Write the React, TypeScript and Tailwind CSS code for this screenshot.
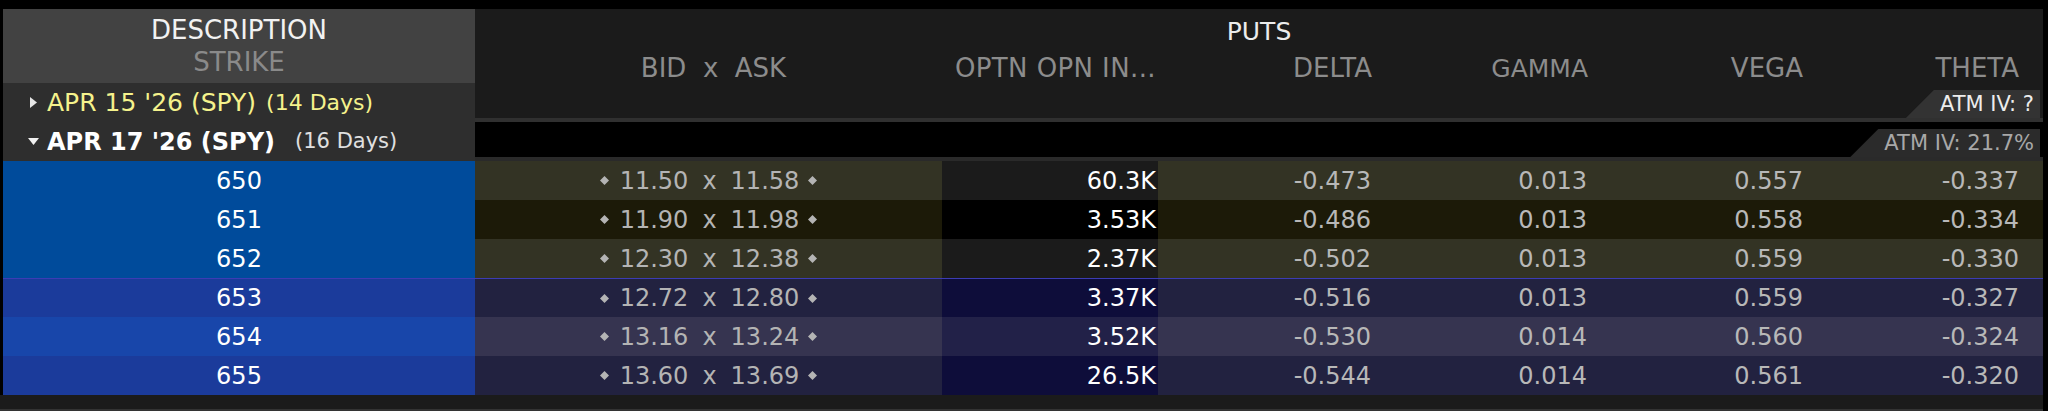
import React from 'react';

interface Row {
    strike: string;
    bid: string;
    ask: string;
    oi: string;
    delta: string;
    gamma: string;
    vega: string;
    theta: string;
    strikeBg: string;
    cellBg: string;
    oiBg: string;
    divider?: boolean;
}

const rows: Row[] = [
    { strike: '650', bid: '11.50', ask: '11.58', oi: '60.3K', delta: '-0.473', gamma: '0.013', vega: '0.557', theta: '-0.337', strikeBg: 'bg-[#004b9b]', cellBg: 'bg-[#333324]', oiBg: 'bg-[#1b1b1b]' },
    { strike: '651', bid: '11.90', ask: '11.98', oi: '3.53K', delta: '-0.486', gamma: '0.013', vega: '0.558', theta: '-0.334', strikeBg: 'bg-[#004b9b]', cellBg: 'bg-[#1c1a08]', oiBg: 'bg-[#000000]' },
    { strike: '652', bid: '12.30', ask: '12.38', oi: '2.37K', delta: '-0.502', gamma: '0.013', vega: '0.559', theta: '-0.330', strikeBg: 'bg-[#004b9b]', cellBg: 'bg-[#333324]', oiBg: 'bg-[#1b1b1b]' },
    { strike: '653', bid: '12.72', ask: '12.80', oi: '3.37K', delta: '-0.516', gamma: '0.013', vega: '0.559', theta: '-0.327', strikeBg: 'bg-[#1b3b9b]', cellBg: 'bg-[#222240]', oiBg: 'bg-[#0e0d3a]', divider: true },
    { strike: '654', bid: '13.16', ask: '13.24', oi: '3.52K', delta: '-0.530', gamma: '0.014', vega: '0.560', theta: '-0.324', strikeBg: 'bg-[#1846aa]', cellBg: 'bg-[#363450]', oiBg: 'bg-[#222148]' },
    { strike: '655', bid: '13.60', ask: '13.69', oi: '26.5K', delta: '-0.544', gamma: '0.014', vega: '0.561', theta: '-0.320', strikeBg: 'bg-[#1b3b9b]', cellBg: 'bg-[#222240]', oiBg: 'bg-[#0e0d3a]' },
];

const Diamond = () => (
    <svg width="9" height="9" viewBox="0 0 9 9" className="shrink-0">
        <polygon points="4.5,0 9,4.5 4.5,9 0,4.5" fill="#b4b4b4" />
    </svg>
);

const Badge = ({ label, light }: { label: string; light?: boolean }) => (
    <div
        className={`flex h-[28px] items-center justify-end pl-[34px] pr-[6px] text-[21px] [clip-path:polygon(28px_0,100%_0,100%_100%,0_100%)] ${
            light ? 'bg-[#333333] text-[#ececec]' : 'bg-[#2b2b2b] text-[#a8a8a8]'
        }`}
    >
        {label}
    </div>
);

const GreekCell = ({ value }: { value: string }) => (
    <div className="flex w-[216px] justify-end pr-[3px] text-[#b8b8b8]">{value}</div>
);

export default function App() {
    return (
        <div className="w-[2048px] h-[411px] overflow-hidden bg-black pt-[9px] font-['DejaVu_Sans',sans-serif] leading-none">
            {/* header area */}
            <div className="flex pl-[3px]">
                <div className="w-[472px] shrink-0">
                    <div className="h-[74px] bg-[#424242] pt-[5px] text-center text-[26px]">
                        <div className="flex h-[32px] items-center justify-center text-[#f2f2f2]">DESCRIPTION</div>
                        <div className="flex h-[32px] items-center justify-center text-[#8a8a8a]">STRIKE</div>
                    </div>
                    <div className="flex h-[39px] items-center bg-[#2e2e2e] pl-[27px]">
                        <svg width="7" height="11" viewBox="0 0 7 11" className="mr-[10px]">
                            <polygon points="0,0 7,5.5 0,11" fill="#e6e6e6" />
                        </svg>
                        <span className="text-[25px] text-[#f5f28c]">APR 15 '26 (SPY)</span>
                        <span className="ml-[10px] text-[22px] text-[#f5f28c]">(14 Days)</span>
                    </div>
                    <div className="flex h-[39px] items-center bg-[#2e2e2e] pl-[25px]">
                        <svg width="11" height="7" viewBox="0 0 11 7" className="mr-[8px]">
                            <polygon points="0,0 11,0 5.5,7" fill="#f0f0f0" />
                        </svg>
                        <span className="text-[24px] font-bold text-white">APR 17 '26 (SPY)</span>
                        <span className="ml-[20px] text-[21px] text-[#e0e0e0]">(16 Days)</span>
                    </div>
                </div>
                <div className="w-[1568px] shrink-0">
                    <div className="bg-[#1b1b1b]">
                        <div className="flex h-[44px] items-center justify-center text-[25px] text-[#ececec]">PUTS</div>
                        <div className="flex h-[30px] items-center text-[26px] text-[#8c8c8c]">
                            <div className="flex w-[467px] justify-center whitespace-pre pl-[10px]">BID  x  ASK</div>
                            <div className="flex w-[216px] justify-end pr-[2px] tracking-[0.4px]">OPTN OPN IN...</div>
                            <div className="flex w-[216px] justify-end pr-[2px]">DELTA</div>
                            <div className="flex w-[216px] justify-end pr-[2px] text-[25px]">GAMMA</div>
                            <div className="flex w-[216px] justify-end pr-[3px]">VEGA</div>
                            <div className="flex w-[216px] justify-end pr-[3px]">THETA</div>
                        </div>
                        <div className="flex h-[35px] items-end justify-end pr-[3px]">
                            <Badge label="ATM IV: ?" light />
                        </div>
                    </div>
                    <div className="h-[4px] bg-[#303030]" />
                    <div className="flex h-[35px] items-end justify-end bg-black pr-[3px]">
                        <Badge label="ATM IV: 21.7%" />
                    </div>
                    <div className="h-[4px] bg-[#2a2a2a]" />
                </div>
            </div>

            {/* strikes */}
            <div className="pl-[3px]">
                {rows.map((row) => (
                    <div
                        key={row.strike}
                        className={`flex h-[39px] w-[2040px] text-[24px] ${row.divider ? 'border-t border-[#3c3cb4]' : ''}`}
                    >
                        <div className={`flex w-[472px] items-center justify-center text-white ${row.strikeBg}`}>
                            {row.strike}
                        </div>
                        <div className={`flex w-[1568px] items-center ${row.cellBg}`}>
                            <div className="flex w-[467px] items-center justify-center text-[#b4b4b4]">
                                <Diamond />
                                <span className="ml-[11px]">{row.bid}</span>
                                <span className="mx-[14px]">x</span>
                                <span className="mr-[9px]">{row.ask}</span>
                                <Diamond />
                            </div>
                            <div className={`flex h-full w-[216px] items-center justify-end pr-[2px] text-white ${row.oiBg}`}>
                                {row.oi}
                            </div>
                            <GreekCell value={row.delta} />
                            <GreekCell value={row.gamma} />
                            <GreekCell value={row.vega} />
                            <GreekCell value={row.theta} />
                        </div>
                    </div>
                ))}
            </div>
            <div className="h-[14px] w-[2043px] bg-[#1b1b1b]" />
            <div className="h-[2px] w-[2043px] bg-[#333333]" />
        </div>
    );
}
